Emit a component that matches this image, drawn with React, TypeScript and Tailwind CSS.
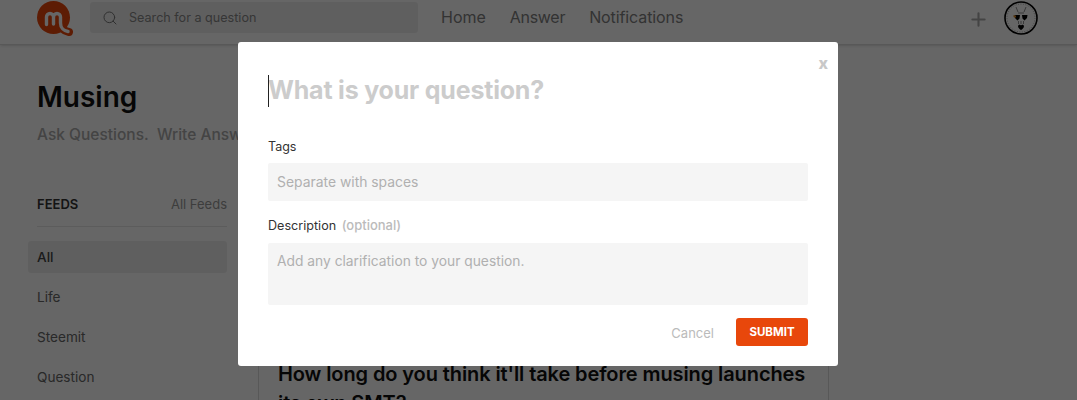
import { Search, Plus } from "lucide-react";

const feeds = ["All", "Life", "Steemit", "Question"];

function Logo() {
  return (
    <svg width="36" height="36" viewBox="0 0 36 36" className="shrink-0">
      <circle cx="16.5" cy="16.5" r="16.5" fill="#e8470b" />
      <path d="M24 22 C24 27 27 30 32 31" fill="none" stroke="#e8470b" strokeWidth="8" strokeLinecap="round" />
      <path d="M9.5 23.5 V16 a3.5 3.5 0 0 1 7 0 V23 M16.5 16 a3.5 3.5 0 0 1 7 0 V22 C23.5 27 27 30 31 30.5" fill="none" stroke="#fff" strokeWidth="3.4" strokeLinecap="round" />
    </svg>
  );
}

function Avatar() {
  return (
    <svg width="34" height="34" viewBox="0 0 34 34" className="shrink-0">
      <circle cx="17" cy="17" r="16" fill="#fff" stroke="#000" strokeWidth="1.6" />
      <circle cx="17" cy="17" r="14" fill="none" stroke="#555" strokeWidth="0.5" strokeDasharray="1 1.5" />
      <path d="M10.5 14 H16 L15.5 17.5 L13.5 19.5 L11 17 Z M18 14 H23.5 L23 17 L20.5 19.5 L18.5 17.5 Z" fill="#000" />
      <path d="M9 14.5 H12 V16.5 H10 Z" fill="#e08a1e" />
      <path d="M14 25 C14.5 23.5 16.5 23.5 17 24.5 C17.5 23.5 19.5 23.5 20 25 C20 27 18 28.5 17 29 C16 28.5 14 27 14 25 Z" fill="#000" />
      <path d="M12 6 L14 11 M22 6 L20 11 M14.5 20 V23 M17 20 V23 M19.5 20 V23 M14 12 H20" stroke="#777" strokeWidth="0.8" />
    </svg>
  );
}

export default function App() {
  return (
    <div className="relative h-[400px] w-[1077px] overflow-hidden bg-white font-['Inter','Liberation_Sans',sans-serif]">
      <header className="flex h-[45px] items-start border-b border-[#ddd] bg-white pl-[37px] pt-px shadow-sm">
        <Logo />
        <div className="ml-[17px] mt-px flex h-[31px] w-[328px] items-center rounded-[3px] bg-[#eee] pl-3 pt-px">
          <Search size={16} strokeWidth={1.5} className="text-[#777]" />
          <span className="ml-[11px] text-[12.6px] text-[#888]">Search for a question</span>
        </div>
        <nav className="ml-[23px] mt-[4px] flex gap-6 text-[16px] text-[#808080]">
          <span>Home</span>
          <span className="tracking-[-0.3px]">Answer</span>
          <span className="tracking-[-0.1px]">Notifications</span>
        </nav>
        <Plus size={21} strokeWidth={2.4} className="ml-[285px] mt-[8px] text-[#aaa]" />
        <div className="ml-[15px]"><Avatar /></div>
      </header>

      <main className="flex pl-7">
        <aside className="w-[199px] pt-[34px]">
          <h1 className="pl-[9px] text-[28px] font-semibold leading-9 text-[#111]">Musing</h1>
          <p className="mt-[8px] whitespace-nowrap pl-[9px] text-[15.5px] font-medium text-[#aaa]">Ask Questions.&nbsp; Write Answers.</p>
          <div className="mt-[49px] ml-[9px] flex items-center justify-between border-b border-[#e5e5e5] pb-[11px] text-[13px]">
            <span className="font-semibold text-[#333]">FEEDS</span>
            <span className="text-[#999]">All Feeds</span>
          </div>
          <ul className="mt-[14px] text-[13.6px] text-[#666]">
            {feeds.map((f, i) => (
              <li key={f} className={i === 0 ? "flex h-8 items-center rounded-[3px] bg-[#eee] pl-[9px] font-medium text-[#444]" : "mt-2 flex h-8 items-center pl-[9px]"}>
                {f}
              </li>
            ))}
          </ul>
        </aside>
        <section className="ml-[31px] mt-[45px] h-[400px] w-[571px] border-x border-[#ddd] pl-[19px] pr-2 pt-[270px]">
          <h2 className="text-[20px] font-semibold leading-[29px] tracking-[-0.1px] text-[#111]">How long do you think it'll take before musing launches its own SMT?</h2>
        </section>
      </main>

      <div className="absolute inset-0 bg-black/60">
        <div className="relative ml-[238px] mt-[42px] h-[324px] w-[600px] rounded-[3px] bg-white px-[30px] pt-[31px]">
          <span className="absolute right-[10px] top-[9px] text-[16px] font-extrabold text-[#c8c8c8]">x</span>
          <div className="relative">
            <span className="absolute left-0 top-[2px] h-8 w-px bg-[#222]" />
            <input readOnly placeholder="What is your question?" className="h-9 w-full bg-transparent text-[25px] font-bold tracking-[-0.2px] text-[#222] outline-none placeholder:text-[#ccc]" />
          </div>
          <label className="mt-[30px] block text-[12.5px] leading-4 text-[#333]">Tags</label>
          <input readOnly placeholder="Separate with spaces" className="mt-[8px] h-[38px] w-full rounded-[2px] bg-[#f5f5f5] px-[9px] text-[13.9px] outline-none placeholder:text-[#b0b0b0]" />
          <label className="mt-4 block text-[12.6px] leading-4 text-[#333]">
            Description <span className="ml-[2px] text-[13px] font-medium text-[#bbb]">(optional)</span>
          </label>
          <textarea readOnly placeholder="Add any clarification to your question." className="mt-[9px] block h-[62px] w-full resize-none rounded-[2px] bg-[#f5f5f5] px-[9px] py-2 text-[13.8px] outline-none placeholder:text-[#b0b0b0]" />
          <div className="mt-[13px] flex items-center justify-end">
            <span className="pt-[3px] text-[13px] text-[#bbb]">Cancel</span>
            <button className="ml-[22px] h-7 w-[72px] rounded-[3px] bg-[#e8470b] pt-px text-[11.5px] font-bold text-white">SUBMIT</button>
          </div>
        </div>
      </div>
    </div>
  );
}
